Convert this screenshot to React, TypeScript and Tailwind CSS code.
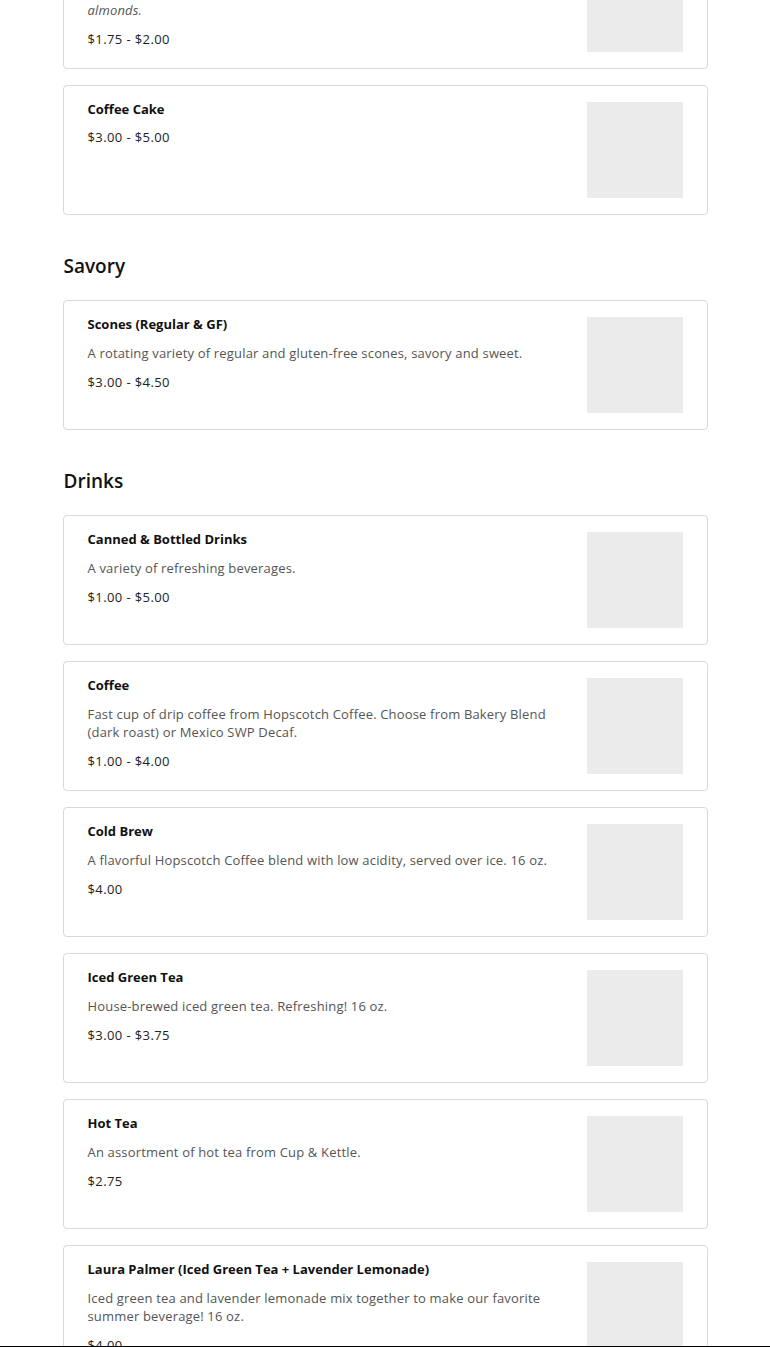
import React from "react";

type Item = { title: string; desc?: string; price: string; italic?: boolean };
type Section = { name?: string; items: Item[] };

const sections: Section[] = [
  {
    items: [
      {
        title: "Almond Croissant",
        desc: "Flaky croissant filled with almond cream and topped with toasted\nalmonds.",
        price: "$1.75 - $2.00",
        italic: true,
      },
      { title: "Coffee Cake", price: "$3.00 - $5.00" },
    ],
  },
  {
    name: "Savory",
    items: [
      {
        title: "Scones (Regular & GF)",
        desc: "A rotating variety of regular and gluten-free scones, savory and sweet.",
        price: "$3.00 - $4.50",
      },
    ],
  },
  {
    name: "Drinks",
    items: [
      { title: "Canned & Bottled Drinks", desc: "A variety of refreshing beverages.", price: "$1.00 - $5.00" },
      {
        title: "Coffee",
        desc: "Fast cup of drip coffee from Hopscotch Coffee. Choose from Bakery Blend (dark roast) or Mexico SWP Decaf.",
        price: "$1.00 - $4.00",
      },
      {
        title: "Cold Brew",
        desc: "A flavorful Hopscotch Coffee blend with low acidity, served over ice. 16 oz.",
        price: "$4.00",
      },
      { title: "Iced Green Tea", desc: "House-brewed iced green tea. Refreshing! 16 oz.", price: "$3.00 - $3.75" },
      { title: "Hot Tea", desc: "An assortment of hot tea from Cup & Kettle.", price: "$2.75" },
      {
        title: "Laura Palmer (Iced Green Tea + Lavender Lemonade)",
        desc: "Iced green tea and lavender lemonade mix together to make our favorite summer beverage! 16 oz.",
        price: "$4.00",
      },
    ],
  },
];

function Card({ item }: { item: Item }) {
  return (
    <div className="flex gap-[24px] rounded-[4px] border border-[#d9d9d9] bg-white px-[24px] py-[16px]">
      <div className="-mt-[1px] flex-1">
        <div className="text-[13px] font-bold leading-[16px] text-[#111]">{item.title}</div>
        {item.desc && (
          <div
            className={`mt-[12px] whitespace-pre-line text-[13px] leading-[18px] tracking-[0.17px] text-[#555] ${
              item.italic ? "italic" : ""
            }`}
          >
            {item.desc}
          </div>
        )}
        <div className="mt-[11px] text-[13px] leading-[18px] tracking-[0.4px] text-[#222]">{item.price}</div>
      </div>
      <div className="h-[96px] w-[96px] shrink-0 bg-[#ebebeb]" />
    </div>
  );
}

export default function App() {
  return (
    <div
      className="relative h-[1347px] overflow-hidden bg-white"
      style={{ fontFamily: '"Open Sans", "Noto Sans", sans-serif' }}
    >
      <div className="mx-auto -mt-[61px] w-[645px]">
        {sections.map((s, si) => (
          <div key={si}>
            {s.name && (
              <h2 className="mt-[39px] mb-[22px] pl-[1px] text-[19px] font-semibold leading-[24px] text-[#111]">
                {s.name}
              </h2>
            )}
            <div className="flex flex-col gap-[16px]">
              {s.items.map((it, i) => (
                <Card key={i} item={it} />
              ))}
            </div>
          </div>
        ))}
      </div>
      <div className="fixed bottom-0 left-0 right-0 h-[1px] bg-black" />
    </div>
  );
}
